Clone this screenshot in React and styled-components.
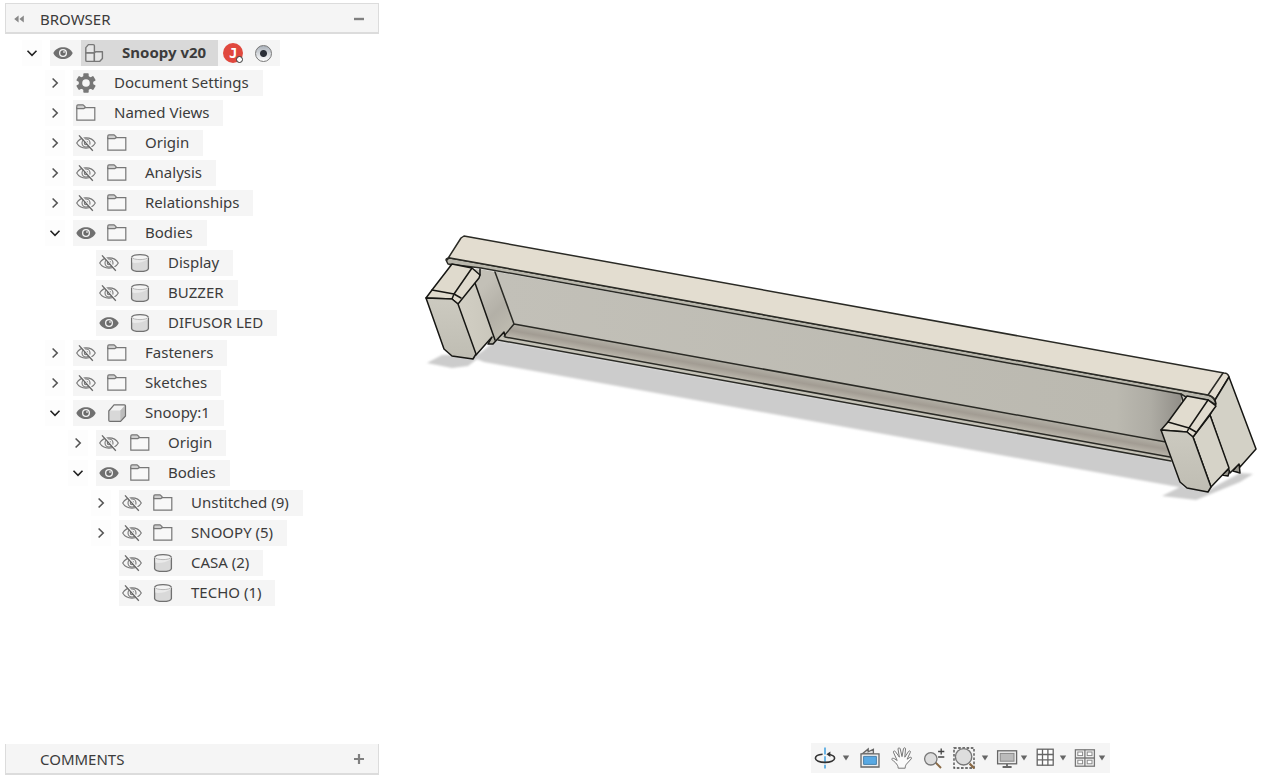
import React, { useState } from 'react'
import styled, { createGlobalStyle, css } from 'styled-components'

const nodes = [
    { id: 'settings', level: 1, label: 'Document Settings', icon: 'gear', arrow: 'closed' },
    { id: 'views', level: 1, label: 'Named Views', icon: 'folder', arrow: 'closed' },
    { id: 'origin', level: 1, label: 'Origin', icon: 'folder', arrow: 'closed', eye: 'off' },
    { id: 'analysis', level: 1, label: 'Analysis', icon: 'folder', arrow: 'closed', eye: 'off' },
    { id: 'relationships', level: 1, label: 'Relationships', icon: 'folder', arrow: 'closed', eye: 'off' },
    { id: 'bodies', level: 1, label: 'Bodies', icon: 'folder', arrow: 'open', eye: 'on' },
    { id: 'display', level: 2, label: 'Display', icon: 'body', eye: 'off' },
    { id: 'buzzer', level: 2, label: 'BUZZER', icon: 'body', eye: 'off' },
    { id: 'difusor', level: 2, label: 'DIFUSOR LED', icon: 'body', eye: 'on' },
    { id: 'fasteners', level: 1, label: 'Fasteners', icon: 'folder', arrow: 'closed', eye: 'off' },
    { id: 'sketches', level: 1, label: 'Sketches', icon: 'folder', arrow: 'closed', eye: 'off' },
    { id: 'snoopy1', level: 1, label: 'Snoopy:1', icon: 'component', arrow: 'open', eye: 'on' },
    { id: 'origin1', level: 2, label: 'Origin', icon: 'folder', arrow: 'closed', eye: 'off' },
    { id: 'bodies1', level: 2, label: 'Bodies', icon: 'folder', arrow: 'open', eye: 'on' },
    { id: 'unstitched', level: 3, label: 'Unstitched (9)', icon: 'folder', arrow: 'closed', eye: 'off' },
    { id: 'snoopy5', level: 3, label: 'SNOOPY (5)', icon: 'folder', arrow: 'closed', eye: 'off' },
    { id: 'casa', level: 3, label: 'CASA (2)', icon: 'body', eye: 'off' },
    { id: 'techo', level: 3, label: 'TECHO (1)', icon: 'body', eye: 'off' },
]

const tools = [
    { id: 'orbit', label: 'Orbit', menu: true, roomy: true },
    { id: 'look', label: 'Look At' },
    { id: 'pan', label: 'Pan' },
    { id: 'zoom', label: 'Zoom' },
    { id: 'fit', label: 'Fit', menu: true, roomy: true },
    { id: 'display', label: 'Display Settings', menu: true },
    { id: 'grid', label: 'Grid and Snaps', menu: true },
    { id: 'viewports', label: 'Viewports', menu: true },
]

function Arrow({ open }) {
    return (
        <svg width='12' height='12' viewBox='0 0 12 12' fill='none' strokeWidth='1.6'>
            {open
                ? <path d='M1.5 3.8 L6 8.3 L10.5 3.8' stroke='#222' />
                : <path d='M3.6 1.5 L8.2 6 L3.6 10.5' stroke='#555' />}
        </svg>
    )
}

function Eye({ state }) {
    if (state === 'on') {
        return (
            <svg width='20' height='20' viewBox='0 0 20 20'>
                <path d='M0.3 10 C4 2.2 16 2.2 19.7 10 C16 18 4 18 0.3 10 Z' fill='#707070' />
                <circle cx='10' cy='10' r='4' fill='#f5f5f5' />
                <circle cx='10' cy='10' r='2.7' fill='#6a6a6a' />
                <circle cx='11' cy='9' r='0.9' fill='#ddd' />
            </svg>
        )
    }
    return (
        <svg width='20' height='20' viewBox='0 0 20 20' fill='none' stroke='#777' strokeWidth='1.1'>
            <path d='M0.7 10 C4.5 3.2 15.5 3.2 19.3 10 C15.5 16.8 4.5 16.8 0.7 10 Z' />
            <circle cx='10' cy='10' r='4' />
            <circle cx='10' cy='10' r='1.7' />
            <path d='M4.4 2.3 L17.6 17.3' stroke='#f5f5f5' strokeWidth='1.6' />
            <path d='M3 2.4 L16.8 17.8' stroke='#666' strokeWidth='1.3' />
        </svg>
    )
}

function NodeIcon({ type }) {
    if (type === 'gear') {
        return (
            <svg width='20' height='20' viewBox='0 0 20 20'>
                <g fill='#777'>
                    {[0, 60, 120].map((a) => (
                        <rect key={a} x='7.3' y='0.2' width='5.4' height='19.6' rx='0.8' transform={`rotate(${a} 10 10)`} />
                    ))}
                    <circle cx='10' cy='10' r='7.3' />
                </g>
                <circle cx='10' cy='10' r='3.8' fill='#f5f5f5' />
            </svg>
        )
    }
    if (type === 'folder') {
        return (
            <svg width='20' height='20' viewBox='0 0 20 20' stroke='#777' strokeWidth='1.2'>
                <path d='M0.8 4.6 H18.8 V17.2 H0.8 Z' fill='#f8f8f8' />
                <path d='M0.8 5.6 V3 Q0.8 1.8 2 1.8 H7 L9 3.6 V4.6 L7.8 5.6 Z' fill='#cfcfcf' />
            </svg>
        )
    }
    if (type === 'body') {
        return (
            <svg width='20' height='20' viewBox='0 0 20 20'>
                <path d='M1.6 4.2 V15.6 C2.4 19.4 17.6 19.4 18.4 15.6 V4.2' fill='#d9d9d9' stroke='#707070' strokeWidth='1.3' />
                <path d='M2.4 5 V9.6 C5 10.6 13 9.4 17.6 6.4 V5 Z' fill='#eaeaea' />
                <ellipse cx='10' cy='4.2' rx='8.4' ry='2.7' fill='#f4f4f4' stroke='none' />
                <path d='M1.6 4.2 C3 0.8 17 0.8 18.4 4.2' fill='none' stroke='#707070' strokeWidth='1.3' />
                <path d='M1.6 4.2 C3 7.4 17 7.4 18.4 4.2' fill='none' stroke='#b8b8b8' strokeWidth='1' />
            </svg>
        )
    }
    if (type === 'component') {
        return (
            <svg width='20' height='20' viewBox='0 0 20 20' strokeLinejoin='round'>
                <path d='M1.8 8 L7 1.8 H18.5 V13 L13.6 18.4 H3 Q1.8 18.4 1.8 17.2 Z' fill='#d8d8d8' />
                <path d='M2 7.6 L7 2 H18 L13.4 7.6 Z' fill='#f2f2f2' />
                <path d='M13.4 7.6 L18.3 2.2 V13 L13.4 18 Z' fill='#bdbdbd' />
                <path d='M1.8 8 L7 1.8 H17.3 Q18.5 1.8 18.5 3 V13 L13.6 18.4 H3 Q1.8 18.4 1.8 17.2 Z' fill='none' stroke='#707070' strokeWidth='1.2' />
            </svg>
        )
    }
    return (
        <svg width='20' height='20' viewBox='0 0 20 20' fill='#e6e6e6' stroke='#777' strokeWidth='1.4' strokeLinejoin='round'>
            <path d='M1.8 10 V4.6 L4.4 1.6 H9.2 Q10.4 1.6 10.4 2.8 V10 Z' />
            <path d='M1.8 10 H10.4 V18.4 H3 Q1.8 18.4 1.8 17.2 Z' />
            <path d='M10.4 18.4 V10 L11.6 8.8 H18.4 V15.4 L15.6 18.4 Z' />
        </svg>
    )
}

function ToolIcon({ type }) {
    switch (type) {
        case 'orbit':
            return (
                <svg width='22' height='22' viewBox='0 0 22 22' fill='none'>
                    <path d='M11 0.6 V21.6' stroke='#3c9fe0' strokeWidth='1.5' strokeDasharray='7 1.6' />
                    <path d='M8.6 7.2 C3.6 7.6 1.4 9.4 1.4 11.2 C1.4 13.6 5.6 15.4 11 15.4 C16.4 15.4 20.6 13.6 20.6 11.2 C20.6 9.4 18 7.8 14 7.3' stroke='#333' strokeWidth='1.6' />
                    <path d='M12.4 7.2 L16.4 4.6 V9.9 Z' fill='#333' />
                </svg>
            )
        case 'look':
            return (
                <svg width='22' height='22' viewBox='0 0 22 22' stroke='#666' strokeWidth='1.3'>
                    <path d='M3.4 6.8 L9.2 2 V4.8 L14.4 2.2 V6.8 Z' fill='#ddd' />
                    <path d='M2 6.8 H20 V20 H2 Z' fill='#eee' />
                    <path d='M4.6 9.4 H17.4 V17.4 H4.6 Z' fill='#58a9e4' stroke='#4a82ad' strokeWidth='1' />
                </svg>
            )
        case 'pan':
            return (
                <svg width='22' height='22' viewBox='0 0 22 22' fill='#fafafa' stroke='#777' strokeWidth='1' strokeLinejoin='round'>
                    <path d='M7.2 21.2 C7.2 19 6 17.4 4.6 15.8 C3.4 14.2 1.8 13.8 0.7 12.4 C0.7 11.2 2 11 3.2 11.6 L6.2 13.5 L2.4 5.2 C2.2 3.8 3.8 3.4 4.4 4.6 L8.4 10.2 L7 2 C7 0.6 8.8 0.4 9.2 1.8 L11 9.6 L12.5 1.6 C12.9 0.3 14.7 0.7 14.5 2 L13.8 10.2 L17.6 4.4 C18.4 3.3 19.9 4.1 19.3 5.4 L16.1 12.2 L18.9 10.4 C20.2 9.8 21.1 10.9 20.1 12 L15.4 17.2 C14.4 18.6 14.2 19.6 14.2 21.2 Z' />
                </svg>
            )
        case 'zoom':
            return (
                <svg width='22' height='22' viewBox='0 0 22 22' fill='none'>
                    <path d='M12.4 15.4 L18 21' stroke='#8a6a45' strokeWidth='2' />
                    <circle cx='7.8' cy='11.8' r='6.2' fill='#ddd' stroke='#777' strokeWidth='1.3' />
                    <path d='M18.2 1.4 V7.6 M15.1 4.5 H21.3 M15.1 10 H21.3' stroke='#444' strokeWidth='1.3' />
                </svg>
            )
        case 'fit':
            return (
                <svg width='22' height='22' viewBox='0 0 22 22' fill='none'>
                    <rect x='1' y='1' width='20' height='20' stroke='#444' strokeWidth='1.3' strokeDasharray='2.6 1.6' />
                    <path d='M16.6 16.6 L21.4 21.4' stroke='#8a6a45' strokeWidth='2.2' />
                    <circle cx='10.6' cy='9.8' r='8.2' fill='#ddd' stroke='#777' strokeWidth='1.4' />
                </svg>
            )
        case 'display':
            return (
                <svg width='22' height='22' viewBox='0 0 22 22' fill='none' stroke='#666'>
                    <rect x='1.6' y='3.8' width='19' height='13' fill='#eee' strokeWidth='1.3' />
                    <rect x='4.2' y='6.4' width='13.8' height='7.8' fill='#bbb' stroke='#888' strokeWidth='1' />
                    <path d='M11 17 V19.6 M6.6 20 H15.6' strokeWidth='1.8' />
                </svg>
            )
        case 'grid':
            return (
                <svg width='22' height='22' viewBox='0 0 22 22' stroke='#666' strokeWidth='1.3'>
                    <rect x='2.2' y='2.2' width='16' height='16' fill='#fff' />
                    <path d='M7.5 2 V18.4 M12.9 2 V18.4 M2 7.5 H18.4 M2 12.9 H18.4' />
                </svg>
            )
        default:
            return (
                <svg width='22' height='22' viewBox='0 0 22 22' fill='none' stroke='#777' strokeWidth='1.3'>
                    <rect x='1.4' y='2.8' width='19' height='16.4' />
                    <path d='M10.9 2.8 V19.2 M1.4 11 H20.4' />
                    <g strokeWidth='1' stroke='#888' fill='#fff'>
                        <rect x='3.8' y='5' width='4.8' height='3.6' />
                        <rect x='13.2' y='5' width='4.8' height='3.6' />
                        <rect x='3.8' y='13.2' width='4.8' height='3.6' />
                        <rect x='13.2' y='13.2' width='4.8' height='3.6' />
                    </g>
                </svg>
            )
    }
}

function Model() {
    return (
        <Scene viewBox='379 0 908 743' role='img' aria-label='DIFUSOR LED body'>
            <defs>
                <filter id='soft' x='-10%' y='-10%' width='120%' height='120%'>
                    <feGaussianBlur stdDeviation='0.8' />
                </filter>
                <linearGradient id='back' gradientUnits='userSpaceOnUse' x1='500' y1='0' x2='1185' y2='0'>
                    <stop offset='0' stopColor='#c2c0b8' />
                    <stop offset='0.9' stopColor='#bbb9b0' />
                    <stop offset='0.95' stopColor='#aeaca4' />
                    <stop offset='1' stopColor='#8e8b85' />
                </linearGradient>
                {/* runs across the floor strip, at right angles to its long edges */}
                <linearGradient id='floor' gradientUnits='userSpaceOnUse' x1='700' y1='357.7' x2='697.3' y2='372.6'>
                    <stop offset='0' stopColor='#b3b0a6' />
                    <stop offset='0.45' stopColor='#a29c93' />
                    <stop offset='1' stopColor='#bfbbb0' />
                </linearGradient>
                <linearGradient id='wall' gradientUnits='userSpaceOnUse' x1='480' y1='290' x2='512' y2='322'>
                    <stop offset='0' stopColor='#c3c0b7' />
                    <stop offset='0.6' stopColor='#b3b0a7' />
                    <stop offset='1' stopColor='#bcb9ae' />
                </linearGradient>
                <linearGradient id='front' x1='0' y1='0' x2='0' y2='1'>
                    <stop offset='0' stopColor='#cccac0' />
                    <stop offset='1' stopColor='#bfbdb3' />
                </linearGradient>
                <linearGradient id='side' x1='0' y1='0' x2='1' y2='0'>
                    <stop offset='0' stopColor='#d2cfc4' />
                    <stop offset='1' stopColor='#c9c6bb' />
                </linearGradient>
            </defs>

            <g fill='#cccccc' filter='url(#soft)'>
                <path d='M427 363 L442 355 L478 354 L498 343 L468 366 L452 368 Z' />
                <path d='M496 340 L1172 461 L1184 488 L484 362 L474 358 Z' />
                <path d='M1162 496 L1182 486 L1210 489 L1240 473 L1253 474 L1240 482 L1196 500 Z' />
            </g>

            {/* tray */}
            <g stroke='#2a2a25' strokeWidth='1.5' strokeLinejoin='round' strokeLinecap='round'>
                <path d='M448 264 L1210 402 L1171 461 L498 340 Z' fill='#c5c3b8' stroke='none' />
                <path d='M481 269 L1182 394 L1176 443 L514 324 L495 272 Z' fill='url(#back)' stroke='none' />
                <path d='M514 324 L1166 442 L1172 459 L505 337 Z' fill='url(#floor)' stroke='none' />
                <path d='M480 269 L495 272 L514 324 L505 335 L503 332 L495 341 L475 283 Z' fill='url(#wall)' stroke='none' />
                <path d='M495 272 L514 324 L504 336 M514 324 L1166 442' fill='none' />
                <path d='M505 337 L1170 457 M498 340 L1171 461' fill='none' />
                <path d='M448 264 L446 260 Q446 258 450 258 L1208 395 Q1215 397 1216 405 L1208 400 L1186 397 L1181 394 L481 268 Z' fill='#b9b7ac' />
                <path d='M464 236 L1224 373 Q1228 373 1229 377 L1215 400 Q1213 396 1208 395 L450 258 Q448 258 447 260 L461 238 Z' fill='#e3ddd0' />
                <path d='M1223 373 L1208 395 M1181 394 L1183 401' fill='none' />
            </g>

            {/* left foot */}
            <g stroke='#161613' strokeWidth='1.5' strokeLinejoin='round' strokeLinecap='round'>
                <path d='M492 337 L488 344 L493 344 L504 332 L505 336' fill='#b3b1a6' />
                <path d='M458 304 L475 283 L495 340 L492 337 L476 355 Z' fill='url(#side)' stroke='none' />
                <path d='M475 283 L495 340 M492 337 L476 355' fill='none' />
                <path d='M426 298 L432 290 L452 264 L472 268 L480 275 L479 278 L458 304 L452 299 Z' fill='#dfdacd' />
                <path d='M432 290 L454 294 L472 268 M454 294 L452 299 M454 294 L461 298' fill='none' />
                <path d='M426 298 L452 299 L458 304 L476 354 L473 359 L452 356 L444 349 Z' fill='url(#front)' />
                <path d='M480 269 L480 275' fill='none' />
            </g>

            {/* right foot and end face */}
            <g stroke='#161613' strokeWidth='1.5' strokeLinejoin='round' strokeLinecap='round'>
                <path d='M1222 475 L1228 476 L1231 467 Z M1233 471 L1240 473 L1239 463 Z' fill='#99978e' />
                <path d='M1229 377 L1256 449 L1240 467 L1239 464 L1230 473 L1210 415 L1216 404 L1215 400 Z' fill='#d3d1c6' />
                <path d='M1193 437 L1210 415 L1229 468 L1211 487 Z' fill='#d6d3c8' />
                <path d='M1161 430 L1168 422 L1187 396 L1208 400 L1216 406 L1193 437 L1187 432 Z' fill='#e1dccf' />
                <path d='M1168 422 L1189 428 L1208 400 M1189 428 L1187 432 M1189 428 L1196 432' fill='none' />
                <path d='M1161 430 L1187 432 L1193 437 L1211 487 L1208 492 L1187 488 L1180 482 Z' fill='url(#front)' />
            </g>
        </Scene>
    )
}

function TreeRow({ node, hidden, onToggle }) {
    const { level, label, icon, arrow, eye } = node
    const state = hidden ? 'off' : 'on'
    return (
        <Row $level={level}>
            {arrow
                ? <ArrowButton aria-label={`Expand ${label}`}><Arrow open={arrow === 'open'} /></ArrowButton>
                : <ArrowSpace />}
            <RowBody>
                {eye && (
                    <EyeButton aria-label={`Toggle ${label}`} onClick={onToggle}><Eye state={state} /></EyeButton>
                )}
                <NodeButton>
                    <NodeIcon type={icon} />
                    <span>{label}</span>
                </NodeButton>
            </RowBody>
        </Row>
    )
}

function App() {
    const [hidden, setHidden] = useState(() => nodes.filter((n) => n.eye === 'off').map((n) => n.id))

    const toggle = (id) => {
        setHidden(hidden.includes(id) ? hidden.filter((h) => h !== id) : [...hidden, id])
    }

    return (
        <Page>
            <GlobalStyle />
            <Sidebar>
                <PanelBar>
                    <BarButton aria-label='Collapse browser'>
                        <svg width='10' height='8' viewBox='0 0 10 8' fill='#888'>
                            <path d='M4.6 0.6 V7.4 L0.2 4 Z M9.8 0.6 V7.4 L5.4 4 Z' />
                        </svg>
                    </BarButton>
                    <h2>BROWSER</h2>
                    <BarButton aria-label='Minimize browser'>
                        <svg width='12' height='12' viewBox='0 0 12 12'><path d='M1 6 H11' stroke='#808080' strokeWidth='2.4' /></svg>
                    </BarButton>
                </PanelBar>
                <Tree>
                    <Row $level={0}>
                        <ArrowButton aria-label='Collapse Snoopy v20'><Arrow open /></ArrowButton>
                        <RowBody>
                            <EyeButton aria-label='Toggle Snoopy v20'><Eye state='on' /></EyeButton>
                            <NodeButton $selected>
                                <NodeIcon type='assembly' />
                                <span>Snoopy v20</span>
                            </NodeButton>
                            <Extras>
                                <Badge>J<i /></Badge>
                                <Activate type='radio' name='active' aria-label='Activate Snoopy v20' defaultChecked />
                            </Extras>
                        </RowBody>
                    </Row>
                    {nodes.map((node) => (
                        <TreeRow
                            key={node.id}
                            node={node}
                            hidden={hidden.includes(node.id)}
                            onToggle={() => toggle(node.id)}
                        />
                    ))}
                </Tree>
                <PanelBar $bottom>
                    <BarSpace />
                    <h2>COMMENTS</h2>
                    <BarButton aria-label='Expand comments'>
                        <svg width='12' height='12' viewBox='0 0 12 12'><path d='M1 6 H11 M6 1 V11' stroke='#808080' strokeWidth='2.2' /></svg>
                    </BarButton>
                </PanelBar>
            </Sidebar>
            <Viewport>
                <Model />
                <Toolbar>
                    {tools.map(({ id, label, menu, roomy }) => (
                        <Tool key={id} $menu={menu} $roomy={roomy}>
                            <ToolButton aria-label={label}><ToolIcon type={id} /></ToolButton>
                            {menu && (
                                <MenuButton aria-label={`${label} options`}>
                                    <svg width='8' height='6' viewBox='0 0 8 6'><path d='M0.8 0.5 H7.2 L4 5.5 Z' fill='#666' /></svg>
                                </MenuButton>
                            )}
                        </Tool>
                    ))}
                </Toolbar>
            </Viewport>
        </Page>
    )
}

export default App

const GlobalStyle = createGlobalStyle`
    *{
        box-sizing:border-box;
    }
    body{
        margin:0;
        background:#fff;
        color:#3c3c3c;
        font-family:"Noto Sans", "Open Sans", sans-serif;
        font-size:15px;
        line-height:20px;
    }
    button{
        border:0;
        margin:0;
        padding:0;
        background:none;
        font:inherit;
        color:inherit;
        cursor:pointer;
    }
    svg{
        display:block;
        flex-shrink:0;
    }
`

const Page = styled.div`
    display:flex;
    min-height:100vh;
`

const Sidebar = styled.aside`
    display:flex;
    flex-direction:column;
    flex:0 0 379px;
    padding:3px 0 2px 5px;
`

const PanelBar = styled.header`
    display:flex;
    align-items:center;
    height:31px;
    padding:1px 13px 0 8px;
    background:#f5f5f5;
    border:1px solid #dcdcdc;
    border-bottom-width:2px;
    ${(props) => props.$bottom && css`
        margin-top:auto;
        border-top:0;
    `}
    h2{
        flex:1;
        margin:0;
        font-size:15px;
        line-height:20px;
        font-weight:400;
    }
`

const BarButton = styled.button`
    display:flex;
    &:first-child{
        width:26px;
    }
`

const BarSpace = styled.span`
    width:26px;
`

const Tree = styled.div`
    display:flex;
    flex-direction:column;
    align-items:flex-start;
    gap:4px;
    padding:6px 0;
`

const Row = styled.div`
    display:flex;
    padding-left:${(props) => props.$level * 23 + 17}px;
`

const ArrowButton = styled.button`
    display:flex;
    align-items:center;
    justify-content:center;
    width:20px;
    height:26px;
    margin-right:8px;
    background:#fdfdfd;
`

const ArrowSpace = styled.span`
    width:28px;
`

const RowBody = styled.div`
    display:flex;
    height:26px;
    background:#f5f5f5;
`

const EyeButton = styled.button`
    display:flex;
    align-items:center;
    width:31px;
    padding-left:3px;
`

const NodeButton = styled.button`
    display:flex;
    align-items:center;
    gap:18px;
    padding:0 14px 0 3px;
    white-space:nowrap;
    span{
        padding-bottom:2px;
    }
    ${(props) => props.$selected && css`
        padding-right:12px;
        background:#d9d9d9;
        font-weight:700;
    `}
`

const Extras = styled.div`
    display:flex;
    align-items:center;
    gap:12px;
    padding:0 8px 0 5px;
`

const Badge = styled.span`
    position:relative;
    width:20px;
    height:20px;
    border-radius:50%;
    background:#e0483e;
    color:#fff;
    font-family:"DejaVu Sans Mono", monospace;
    font-size:14px;
    font-weight:700;
    text-align:center;
    i{
        position:absolute;
        right:0;
        bottom:0;
        width:7px;
        height:7px;
        border:1px solid #333;
        border-radius:50%;
        background:#fff;
    }
`

const Activate = styled.input`
    appearance:none;
    width:17px;
    height:17px;
    margin:0;
    border:1px solid #777;
    border-radius:50%;
    background:linear-gradient(#b9bfc6, #fff);
    &:checked{
        background:radial-gradient(circle, #2b2f38 3px, transparent 4px), linear-gradient(#aab1ba, #fff);
    }
`

const Viewport = styled.main`
    display:flex;
    flex-direction:column;
    flex:1;
    min-width:0;
    padding-bottom:4px;
`

const Scene = styled.svg`
    flex:1 1 0;
    min-height:0;
    width:100%;
`

const Toolbar = styled.div`
    display:flex;
    align-items:center;
    align-self:flex-end;
    gap:6px;
    height:30px;
    margin-right:177px;
    padding:0 3px;
    background:#f5f5f5;
`

const Tool = styled.div`
    display:flex;
    align-items:center;
    gap:${(props) => (props.$roomy ? 5 : 1)}px;
    padding:${(props) => (props.$menu ? '0' : '0 2px')};
`

const ToolButton = styled.button`
    width:22px;
    height:22px;
`

const MenuButton = styled.button`
    display:flex;
    align-items:center;
    justify-content:center;
    width:10px;
    height:22px;
`
